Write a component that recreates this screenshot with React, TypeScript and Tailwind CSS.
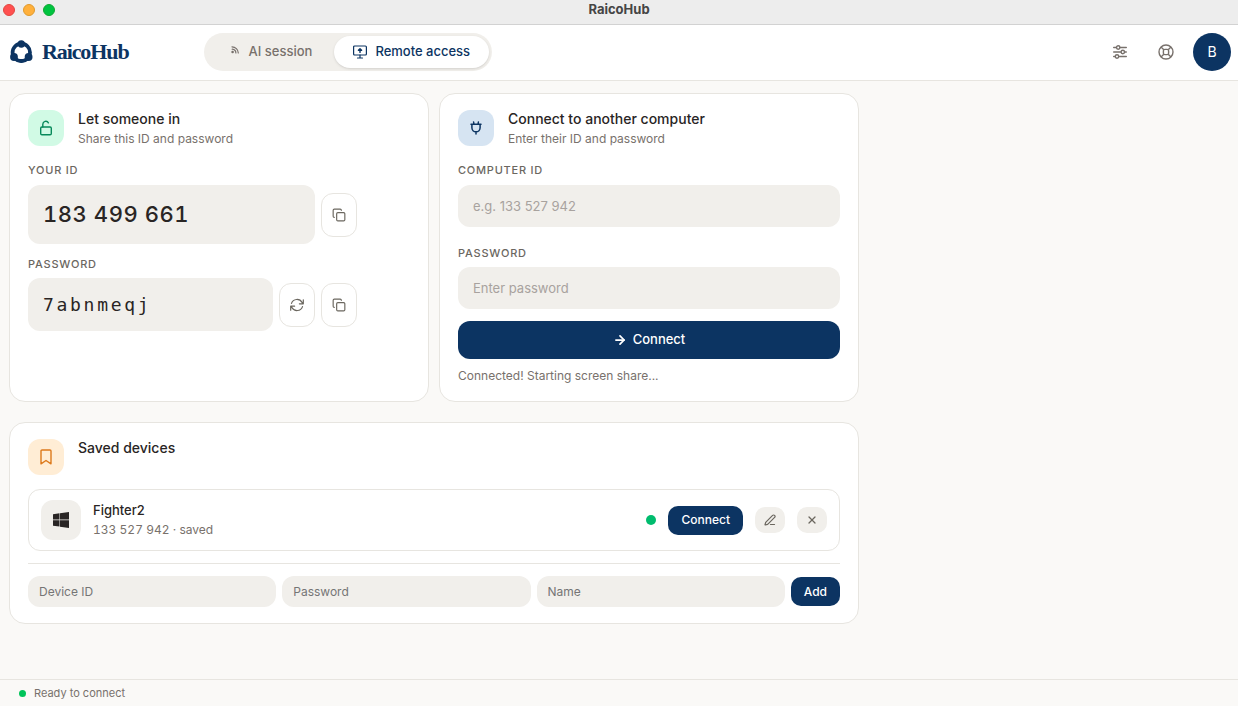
import type { ReactNode } from 'react';
import { ArrowRight, Copy, PenLine, X } from 'lucide-react';

const LABEL = 'block text-[11px] leading-4 font-medium tracking-[0.07em] text-[#6b675f] uppercase';
const FIELD = 'w-full rounded-xl bg-[#f1efeb] text-[#292524] outline-none';
const OUTLINE_BUTTON = 'flex h-11 w-9 shrink-0 items-center justify-center rounded-xl border border-[#e7e5e0] bg-white text-[#6b675f]';

function Logo() {
  return (
    <svg width="24" height="24" viewBox="0 0 24 24" fill="#0c3462" aria-hidden="true">
      <circle cx="12.3" cy="12.4" r="8.7" fill="none" stroke="#0c3462" strokeWidth="3.8" />
      <circle cx="12.3" cy="4" r="3.7" />
      <circle cx="5" cy="17" r="3.9" />
      <circle cx="19.6" cy="17" r="3.9" />
      <path d="M5 19q7.3 7.4 14.6 0z" />
    </svg>
  );
}

function SignalIcon() {
  return (
    <svg width="12" height="12" viewBox="0 0 12 12" fill="none" stroke="currentColor" strokeWidth="1.2" strokeLinecap="round" aria-hidden="true">
      <path d="M3 .8A6.4 6.4 0 0 1 9.3 7M3.2 3.2A4 4 0 0 1 6.9 7" />
      <circle cx="3.6" cy="6" r="1.3" fill="currentColor" stroke="none" />
    </svg>
  );
}

function ScreenUpIcon() {
  return (
    <svg width="14" height="14" viewBox="0 0 14 14" fill="none" stroke="currentColor" strokeWidth="1.2" strokeLinecap="round" strokeLinejoin="round" aria-hidden="true">
      <rect x=".6" y="1" width="12.8" height="9" rx="1" />
      <path d="M7 10v3M4.5 13h5" />
      <path d="M7 7.4V4M5.4 5.3L7 3.8l1.6 1.5z" strokeWidth="1.4" />
    </svg>
  );
}

function SlidersIcon() {
  return (
    <svg width="14" height="14" viewBox="0 0 14 14" fill="none" stroke="currentColor" strokeWidth="1.4" strokeLinecap="round" aria-hidden="true">
      <path d="M.7 2.5h2.7M7 2.5h6.3M.7 7h7.1M11.6 7h1.7M.7 11.5h1.5M5.8 11.5h7.5" />
      <circle cx="5.2" cy="2.5" r="1.7" />
      <circle cx="9.8" cy="7" r="1.7" />
      <circle cx="4" cy="11.5" r="1.7" />
    </svg>
  );
}

function LifebuoyIcon() {
  return (
    <svg width="16" height="16" viewBox="0 0 16 16" fill="none" stroke="currentColor" strokeWidth="1.4" aria-hidden="true">
      <circle cx="8" cy="8" r="7" />
      <rect x="5.4" y="5.4" width="5.2" height="5.2" rx="1.4" />
      <path d="M3 3l2.8 2.8M13 3l-2.8 2.8M3 13l2.8-2.8M13 13l-2.8-2.8" />
    </svg>
  );
}

function UnlockIcon() {
  return (
    <svg width="14" height="16" viewBox="0 0 14 16" fill="none" stroke="currentColor" strokeWidth="1.4" strokeLinecap="round" strokeLinejoin="round" aria-hidden="true">
      <rect x="1.7" y="7" width="10.6" height="7.8" rx="1.2" />
      <path d="M3.8 7V4.2a3 3 0 0 1 5.6-1.4" />
    </svg>
  );
}

function PlugIcon() {
  return (
    <svg width="14" height="14" viewBox="0 0 14 14" fill="none" stroke="currentColor" strokeWidth="1.5" strokeLinecap="round" strokeLinejoin="round" aria-hidden="true">
      <path d="M4.6 1l.3 2M9.4 1l-.3 2M2 3.3h10M2.9 3.3v3.4a4.1 4.1 0 0 0 8.2 0V3.3M7 11v2" />
    </svg>
  );
}

function RefreshIcon() {
  return (
    <svg width="14" height="14" viewBox="0 0 14 14" fill="none" stroke="currentColor" strokeWidth="1.2" strokeLinecap="round" strokeLinejoin="round" aria-hidden="true">
      <path d="M1.5 5.4a5.8 5.8 0 0 1 10.6-.9l1.2 1.3M13.3 1.8v4H9.4" />
      <path d="M12.5 8.6a5.8 5.8 0 0 1-10.6.9L.7 8.2M.7 12.2v-4h3.9" />
    </svg>
  );
}

function BookmarkIcon() {
  return (
    <svg width="12" height="16" viewBox="0 0 12 16" fill="none" stroke="currentColor" strokeWidth="1.4" strokeLinejoin="round" aria-hidden="true">
      <path d="M1 2a1 1 0 0 1 1-1h8a1 1 0 0 1 1 1v12.8l-5-3.3-5 3.3z" />
    </svg>
  );
}

function WindowsIcon() {
  return (
    <svg width="16" height="16" viewBox="0 0 16 16" fill="#292524" aria-hidden="true">
      <path d="M0 2.2l6.5-.9v6.3H0zM7 1.2L16 0v7.6H7zM0 8.3h6.5v6.3L0 13.7zM7 8.3h9V16l-9-1.3z" />
    </svg>
  );
}

function CardHead({ tint, icon, title, subtitle }: { tint: string; icon: ReactNode; title: string; subtitle?: string }) {
  return (
    <div className="flex gap-3.5">
      <span className={`flex size-9 shrink-0 items-center justify-center rounded-xl ${tint}`}>{icon}</span>
      <div>
        <h2 className="text-sm leading-[18px] font-medium text-[#292524]">{title}</h2>
        {subtitle && <p className="mt-0.5 text-xs leading-[18px] text-[#78716c]">{subtitle}</p>}
      </div>
    </div>
  );
}

const NEW_DEVICE_FIELDS = ['Device ID', 'Password', 'Name'];

export default function App() {
  return (
    <div className="flex min-h-screen flex-col bg-[#faf9f7] font-['Inter',sans-serif] text-[#292524]">
      <div className="relative flex h-[25px] items-start justify-center border-b border-[#d2d2d2] bg-[#ededed]">
        <div className="absolute top-1 left-[3px] flex gap-2">
          <span className="size-3 rounded-full border border-[#e2463f] bg-[#ff5050]" />
          <span className="size-3 rounded-full border border-[#e09a2c] bg-[#ffb03c]" />
          <span className="size-3 rounded-full border border-[#0fa832] bg-[#00c440]" />
        </div>
        <p className="text-[13px] leading-[18px] font-bold text-[#454545]">RaicoHub</p>
      </div>

      <header className="flex h-14 items-center border-b border-[#e7e5e0] bg-white pr-[7px] pb-px pl-[9px]">
        <a href="#" className="flex items-center gap-[9px]">
          <Logo />
          <span className="font-['Liberation_Serif',serif] text-[22px] leading-7 font-bold tracking-tighter text-[#0c3462]">RaicoHub</span>
        </a>
        <nav className="ml-[75px] flex h-[38px] items-center rounded-full bg-[#f1efeb] p-[3px] text-[13px] font-medium">
          <button className="flex h-8 items-center gap-2 rounded-full px-[22px] text-[#78716c]">
            <SignalIcon />
            AI session
          </button>
          <button className="flex h-8 items-center gap-2 rounded-full bg-white px-[19px] text-[#0c3462] shadow">
            <ScreenUpIcon />
            Remote access
          </button>
        </nav>
        <div className="ml-auto flex items-center text-[#78716c]">
          <button aria-label="Settings" className="flex size-[46px] items-center justify-center">
            <SlidersIcon />
          </button>
          <button aria-label="Help" className="flex size-[46px] items-center justify-center">
            <LifebuoyIcon />
          </button>
          <button className="ml-1 size-[38px] rounded-full bg-[#0c3462] text-sm text-white">B</button>
        </div>
      </header>

      <main className="w-full max-w-[868px] flex-1 px-[9px] pt-3">
        <div className="grid grid-cols-2 gap-2.5">
          <section className="rounded-2xl border border-[#e7e5e0] bg-white px-[18px] py-4">
            <CardHead tint="bg-[#d1fae5] text-[#07895a]" icon={<UnlockIcon />} title="Let someone in" subtitle="Share this ID and password" />
            <p className={`mt-3.5 ${LABEL}`}>Your ID</p>
            <div className="mt-[7px] flex items-center gap-1.5">
              <output className="flex h-[59px] w-[287px] items-center rounded-xl bg-[#f1efeb] px-[15px] text-[22px] font-medium tracking-wide tabular-nums">183 499 661</output>
              <button aria-label="Copy ID" className={OUTLINE_BUTTON}>
                <Copy size={14} />
              </button>
            </div>
            <p className={`mt-3 ${LABEL}`}>Password</p>
            <div className="mt-1.5 flex items-center gap-1.5">
              <output className="flex h-[53px] w-[245px] items-center rounded-xl bg-[#f1efeb] px-[15px] font-['DejaVu_Sans_Mono',monospace] text-lg tracking-[0.15em]">7abnmeqj</output>
              <button aria-label="New password" className={OUTLINE_BUTTON}>
                <RefreshIcon />
              </button>
              <button aria-label="Copy password" className={OUTLINE_BUTTON}>
                <Copy size={14} />
              </button>
            </div>
          </section>

          <section className="rounded-2xl border border-[#e7e5e0] bg-white px-[18px] py-4">
            <CardHead tint="bg-[#d6e4f2] text-[#0c3462]" icon={<PlugIcon />} title="Connect to another computer" subtitle="Enter their ID and password" />
            <label htmlFor="computer-id" className={`mt-3.5 ${LABEL}`}>Computer ID</label>
            <input id="computer-id" placeholder="e.g. 133 527 942" className={`mt-[7px] h-[42px] px-[15px] text-[13px] placeholder:text-[#a8a29e] ${FIELD}`} />
            <label htmlFor="password" className={`mt-[18px] ${LABEL}`}>Password</label>
            <input id="password" type="password" placeholder="Enter password" className={`mt-1.5 h-[42px] px-[15px] text-[13px] placeholder:text-[#a8a29e] ${FIELD}`} />
            <button className="mt-3 flex h-[38px] w-full items-center justify-center gap-1.5 rounded-xl bg-[#0c3462] text-[13px] font-medium text-white">
              <ArrowRight size={14} strokeWidth={3} />
              Connect
            </button>
            <p className="mt-2 text-xs leading-[18px] text-[#78716c]">Connected! Starting screen share...</p>
          </section>
        </div>

        <section className="mt-5 rounded-2xl border border-[#e7e5e0] bg-white px-[18px] py-4">
          <CardHead tint="bg-[#ffedd5] text-[#dd7a1c]" icon={<BookmarkIcon />} title="Saved devices" />
          <div className="mt-3.5 flex items-center rounded-xl border border-[#e7e5e0] px-3 py-2.5">
            <span className="flex size-10 items-center justify-center rounded-xl bg-[#f1efeb]">
              <WindowsIcon />
            </span>
            <div className="ml-3 flex-1">
              <h3 className="text-[13px] leading-5 font-medium">Fighter2</h3>
              <p className="text-xs leading-5 text-[#78716c] tabular-nums">133 527 942 · saved</p>
            </div>
            <div className="flex items-center gap-3">
              <span className="size-2.5 rounded-full bg-[#00bc6e]" />
              <button className="h-[29px] rounded-[10px] bg-[#0c3462] px-[13px] text-xs font-medium text-white">Connect</button>
              <button aria-label="Edit device" className="flex h-[26px] w-[30px] items-center justify-center rounded-[10px] bg-[#f1efeb] text-[#6b675f]">
                <PenLine size={12} strokeWidth={2.4} />
              </button>
              <button aria-label="Remove device" className="flex h-[26px] w-[30px] items-center justify-center rounded-[10px] bg-[#f1efeb] text-[#6b675f]">
                <X size={12} strokeWidth={2.6} />
              </button>
            </div>
          </div>
          <form className="mt-3 flex items-center gap-1.5 border-t border-[#e7e5e0] pt-3">
            {NEW_DEVICE_FIELDS.map(name => (
              <input key={name} aria-label={name} placeholder={name} className={`h-[31px] min-w-0 flex-1 px-[11px] text-xs placeholder:text-[#757575] ${FIELD}`} />
            ))}
            <button type="button" className="h-[29px] rounded-[10px] bg-[#0c3462] px-[13px] text-xs font-medium text-white">Add</button>
          </form>
        </section>
      </main>

      <footer className="flex h-[27px] items-center gap-2 border-t border-[#e7e5e0] px-[19px] text-[11px] text-[#78716c]">
        <span className="size-[7px] rounded-full bg-[#00c45a]" />
        Ready to connect
      </footer>
    </div>
  );
}
